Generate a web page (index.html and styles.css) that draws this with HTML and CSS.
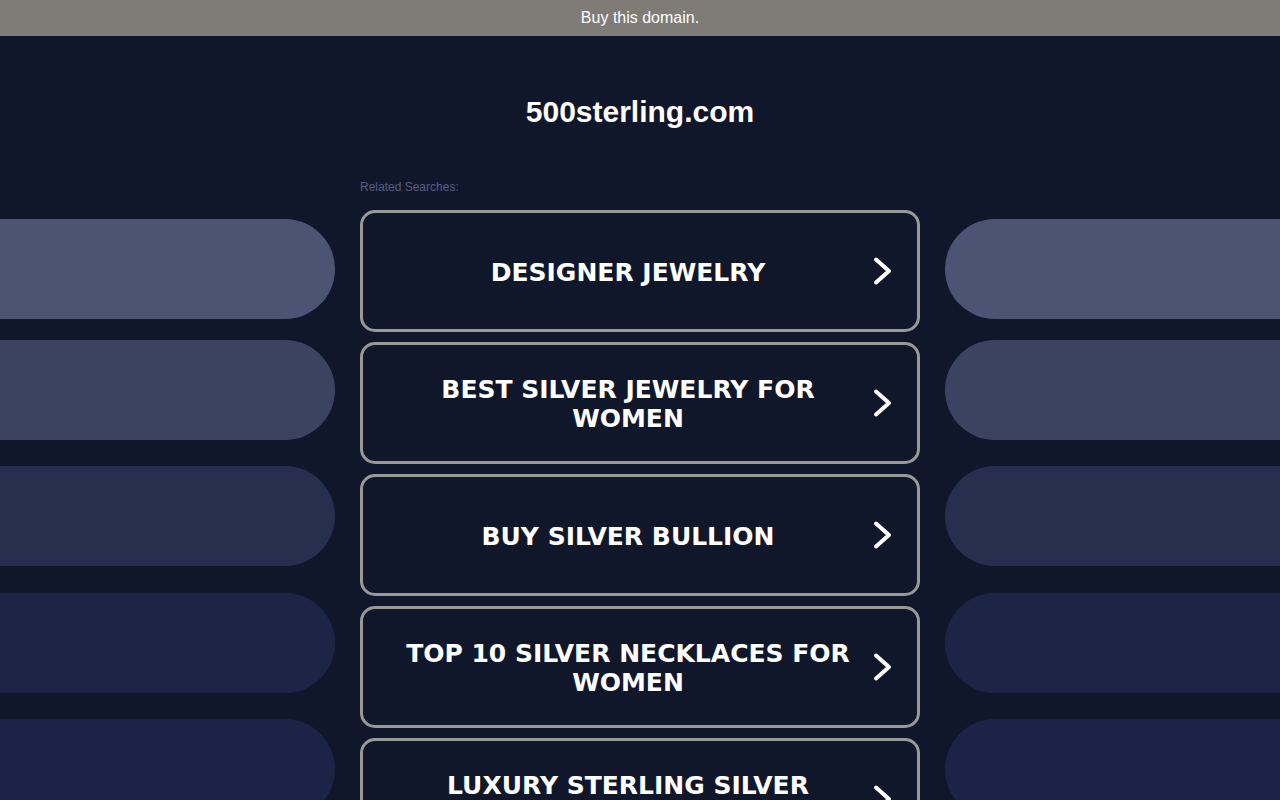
FILE: index.html
```html
<!DOCTYPE html>
<html lang="en">
<head>
  <meta charset="UTF-8">
  <meta name="viewport" content="width=device-width, initial-scale=1.0">
  <title>500sterling.com</title>
  <link rel="stylesheet" href="styles.css">
</head>
<body>
  <div class="topbar"><a href="#">Buy this domain.</a></div>

  <header class="site-head">
    <h1>500sterling.com</h1>
  </header>

  <main class="layout">
    <div class="deco deco-left">
      <div class="pill pill-1"></div>
      <div class="pill pill-2"></div>
      <div class="pill pill-3"></div>
      <div class="pill pill-4"></div>
      <div class="pill pill-5"></div>
    </div>

    <section class="results">
      <p class="results-label">Related Searches:</p>

      <a class="result" href="#">
        <span class="result-text">DESIGNER JEWELRY</span>
        <svg class="chev" viewBox="0 0 24 30" width="24" height="30"><polyline points="8,3.5 21,15 8,26.5"/></svg>
      </a>
      <a class="result" href="#">
        <span class="result-text">BEST SILVER JEWELRY FOR WOMEN</span>
        <svg class="chev" viewBox="0 0 24 30" width="24" height="30"><polyline points="8,3.5 21,15 8,26.5"/></svg>
      </a>
      <a class="result" href="#">
        <span class="result-text">BUY SILVER BULLION</span>
        <svg class="chev" viewBox="0 0 24 30" width="24" height="30"><polyline points="8,3.5 21,15 8,26.5"/></svg>
      </a>
      <a class="result" href="#">
        <span class="result-text">TOP 10 SILVER NECKLACES FOR WOMEN</span>
        <svg class="chev" viewBox="0 0 24 30" width="24" height="30"><polyline points="8,3.5 21,15 8,26.5"/></svg>
      </a>
      <a class="result" href="#">
        <span class="result-text">LUXURY STERLING SILVER JEWELRY</span>
        <svg class="chev" viewBox="0 0 24 30" width="24" height="30"><polyline points="8,3.5 21,15 8,26.5"/></svg>
      </a>
    </section>

    <div class="deco deco-right">
      <div class="pill pill-1"></div>
      <div class="pill pill-2"></div>
      <div class="pill pill-3"></div>
      <div class="pill pill-4"></div>
      <div class="pill pill-5"></div>
    </div>
  </main>
</body>
</html>
```

FILE: styles.css
```css
body {
  margin: 0;
  background: #11172b;
  font-family: "Liberation Sans", Arial, sans-serif;
  color: #fff;
}
.topbar {
  height: 36px;
  background: #7f7b77;
  text-align: center;
  font-size: 16px;
  line-height: 35px;
}
.topbar a {
  color: #fff;
  text-decoration: none;
}
.site-head {
  padding-top: 58px;
  text-align: center;
}
.site-head h1 {
  margin: 0;
  font-size: 30px;
  line-height: 36px;
  font-weight: bold;
}
.layout {
  display: grid;
  grid-template-columns: 1fr 560px 1fr;
  column-gap: 25px;
  padding-top: 50px;
}
.deco {
  padding-top: 39px;
}
.pill {
  height: 100px;
  margin-bottom: 26px;
}
.pill-1 { background: #4b5573; margin-bottom: 21px; }
.pill-2 { background: #3a4461; }
.pill-3 { background: #262f4e; margin-bottom: 27px; }
.pill-4 { background: #1d2546; margin-bottom: 26px; }
.pill-5 { background: #1b2446; }
.deco-left .pill {
  border-radius: 0 50px 50px 0;
}
.deco-right .pill {
  border-radius: 50px 0 0 50px;
}
.results-label {
  margin: 0 0 15px;
  font-size: 12px;
  line-height: 15px;
  color: #555e80;
}
.result {
  display: flex;
  align-items: center;
  box-sizing: border-box;
  height: 122px;
  margin-bottom: 10px;
  padding: 0 25px;
  border: 3px solid #999;
  border-radius: 15px;
  color: #fff;
  text-decoration: none;
}
.result-text {
  flex: 1;
  padding: 2px 14px 0;
  text-align: center;
  font-family: "DejaVu Sans", Verdana, sans-serif;
  font-weight: bold;
  font-size: 25px;
  line-height: 29px;
}
.chev {
  flex: none;
  fill: none;
  stroke: #fff;
  stroke-width: 4;
  stroke-linecap: round;
  stroke-linejoin: round;
}
```
